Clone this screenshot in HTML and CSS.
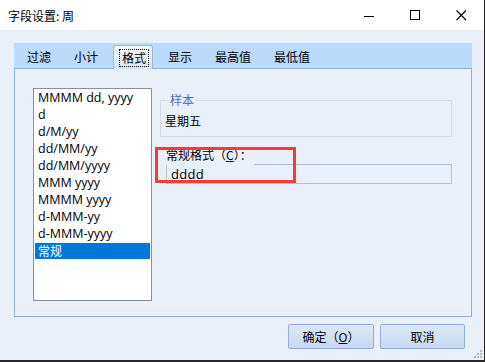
FILE: index.html
```html
<!DOCTYPE html>
<html lang="zh-CN">
<head>
<meta charset="utf-8">
<title>字段设置: 周</title>
<link rel="stylesheet" href="styles.css">
</head>
<body>
<div class="window">
  <div class="titlebar">
    <div class="title">字段设置: 周</div>
    <div class="controls">
      <span class="ctl"><svg width="11" height="11" viewBox="0 0 11 11"><path d="M0 6.5H10" stroke="#000" stroke-width="1"/></svg></span>
      <span class="ctl"><svg width="11" height="11" viewBox="0 0 11 11"><rect x="0.5" y="0.5" width="9" height="9" fill="none" stroke="#000" stroke-width="1"/></svg></span>
      <span class="ctl"><svg width="11" height="11" viewBox="0 0 11 11"><path d="M0.5 0.5L10 10M10 0.5L0.5 10" stroke="#000" stroke-width="1.1"/></svg></span>
    </div>
  </div>
  <div class="client">
    <div class="tabs">
      <div class="tab">过滤</div>
      <div class="tab">小计</div>
      <div class="tab active"><span class="focus">格式</span></div>
      <div class="tab">显示</div>
      <div class="tab">最高值</div>
      <div class="tab">最低值</div>
    </div>
    <div class="panel">
      <ul class="listbox">
        <li>MMMM dd, yyyy</li>
        <li>d</li>
        <li>d/M/yy</li>
        <li>dd/MM/yy</li>
        <li>dd/MM/yyyy</li>
        <li>MMM yyyy</li>
        <li>MMMM yyyy</li>
        <li>d-MMM-yy</li>
        <li>d-MMM-yyyy</li>
        <li class="sel">常规</li>
      </ul>
      <div class="right">
        <fieldset class="group">
          <legend>样本</legend>
          <div class="sample">星期五</div>
        </fieldset>
        <div class="field">
          <div class="fieldlabel">常规格式（<u>C</u>）：</div>
          <div class="textbox">dddd</div>
          <div class="mark"></div>
        </div>
      </div>
    </div>
    <div class="buttons">
      <button class="btn">确定（<u>O</u>）</button>
      <button class="btn">取消</button>
    </div>
    <div class="grip">
      <i></i><i></i><i></i><i></i><i></i><i></i>
    </div>
  </div>
</div>
</body>
</html>
```
FILE: styles.css
```css
html, body {
  margin: 0;
  padding: 0;
  background: #2a2622;
}
body {
  width: 485px;
  height: 362px;
  overflow: hidden;
  font-family: "Segoe UI", "Open Sans", "Noto Sans CJK SC", sans-serif;
  font-size: 12px;
  color: #000;
}
.window {
  width: 484px;
  height: 360px;
  background: #e9f0fa;
  display: flex;
  flex-direction: column;
}
.titlebar {
  height: 30px;
  background: #fff;
  display: flex;
  align-items: center;
  justify-content: space-between;
  flex: none;
}
.title {
  padding-left: 8px;
  font-family: "Noto Sans CJK SC", sans-serif;
  font-size: 12px;
  line-height: 16px;
  margin-top: 1px;
}
.controls {
  display: flex;
  height: 30px;
}
.ctl {
  width: 46px;
  display: flex;
  align-items: center;
  justify-content: center;
}
.ctl svg { display: block; }
.client {
  flex: 1;
  position: relative;
  padding: 13px 12px 0 14px;
  display: flex;
  flex-direction: column;
}
.tabs {
  height: 25px;
  background: #bcdafb;
  display: flex;
  align-items: flex-end;
  padding-left: 5px;
  gap: 7px;
  font-family: "Noto Sans CJK SC", sans-serif;
}
.tab {
  width: 40px;
  box-sizing: border-box;
  padding: 0 8px;
  height: 23px;
  line-height: 23px;
  white-space: nowrap;
  display: flex;
  align-items: center;
}
.tab:nth-child(5), .tab:nth-child(6) { width: 52px; }
.tab.active {
  padding: 0 5px;
  border: 1px solid #9cb5d8;
  border-bottom: none;
  border-radius: 3px 3px 0 0;
  background: linear-gradient(#f6f9fd, #d6e4f5);
  margin-bottom: -1px;
  height: 24px;
  position: relative;
}
.focus {
  display: block;
  border: 1px dotted #000;
  padding: 0 2px;
  line-height: 16px;
  height: 16px;
}
.panel {
  height: 249px;
  box-sizing: border-box;
  border: 1px solid #8fb0e2;
  padding: 19px 19px 0 18px;
  display: flex;
  align-items: flex-start;
  flex: none;
}
.listbox {
  list-style: none;
  margin: 0;
  padding: 1px 0 0;
  width: 119px;
  height: 213px;
  box-sizing: border-box;
  border: 1px solid #8b8f96;
  background: #fff;
  flex: none;
}
.listbox li {
  height: 17px;
  line-height: 16px;
  padding-left: 3px;
  margin: 0 1px;
  white-space: nowrap;
  font-size: 12.5px;
}
.listbox li.sel {
  background: #0078d7;
  color: #fff;
  height: 16px;
  font-family: "Noto Sans CJK SC", sans-serif;
  font-size: 12px;
}
.right {
  flex: 1;
  margin-left: 8px;
  margin-top: 4px;
  font-family: "Noto Sans CJK SC", sans-serif;
}
.group {
  margin: 0;
  padding: 0 4px;
  border: 1px solid #d7dce3;
  height: 45px;
  box-sizing: border-box;
  min-width: 0;
}
.group legend {
  padding: 0 2px;
  margin-left: 3px;
  color: #4a70b8;
  line-height: 16px;
}
.sample {
  line-height: 16px;
  margin-top: 5px;
}
.field {
  position: relative;
  margin-top: 27px;
  margin-left: 6px;
}
.textbox {
  height: 20px;
  box-sizing: border-box;
  border: 1px solid #a8c5ea;
  border-left-color: #b8c4d4;
  padding-left: 4px;
  line-height: 18px;
  font-size: 13px;
  letter-spacing: 0.3px;
  font-family: "Segoe UI", "Open Sans", sans-serif;
}
.fieldlabel {
  position: absolute;
  left: 0;
  top: -18px;
  height: 19px;
  width: 88px;
  background: #e9f0fa;
  line-height: 17px;
}
.fieldlabel u { text-underline-offset: 1px; }
.mark {
  position: absolute;
  left: -11px;
  top: -17px;
  width: 141px;
  height: 36px;
  box-sizing: border-box;
  border: 3px solid #f23b3b;
}
.buttons {
  display: flex;
  justify-content: flex-end;
  gap: 6px;
  margin-top: 7px;
  padding-right: 7px;
}
.btn {
  height: 25px;
  width: 86px;
  margin: 0;
  border: 1px solid #8db0e0;
  border-radius: 2px;
  background: linear-gradient(#dce8f7, #c6daf2);
  font-family: "Noto Sans CJK SC", sans-serif;
  font-size: 12px;
  color: #000;
  padding: 0;
}
.btn + .btn { width: 85px; }
.grip {
  position: absolute;
  right: 2px;
  bottom: 2px;
  width: 8px;
  height: 8px;
}
.grip i {
  position: absolute;
  width: 2px;
  height: 2px;
  background: #b6bcc6;
}
.grip i:nth-child(1) { right: 0; bottom: 0; }
.grip i:nth-child(2) { right: 3px; bottom: 0; }
.grip i:nth-child(3) { right: 6px; bottom: 0; }
.grip i:nth-child(4) { right: 0; bottom: 3px; }
.grip i:nth-child(5) { right: 3px; bottom: 3px; }
.grip i:nth-child(6) { right: 0; bottom: 6px; }
```
